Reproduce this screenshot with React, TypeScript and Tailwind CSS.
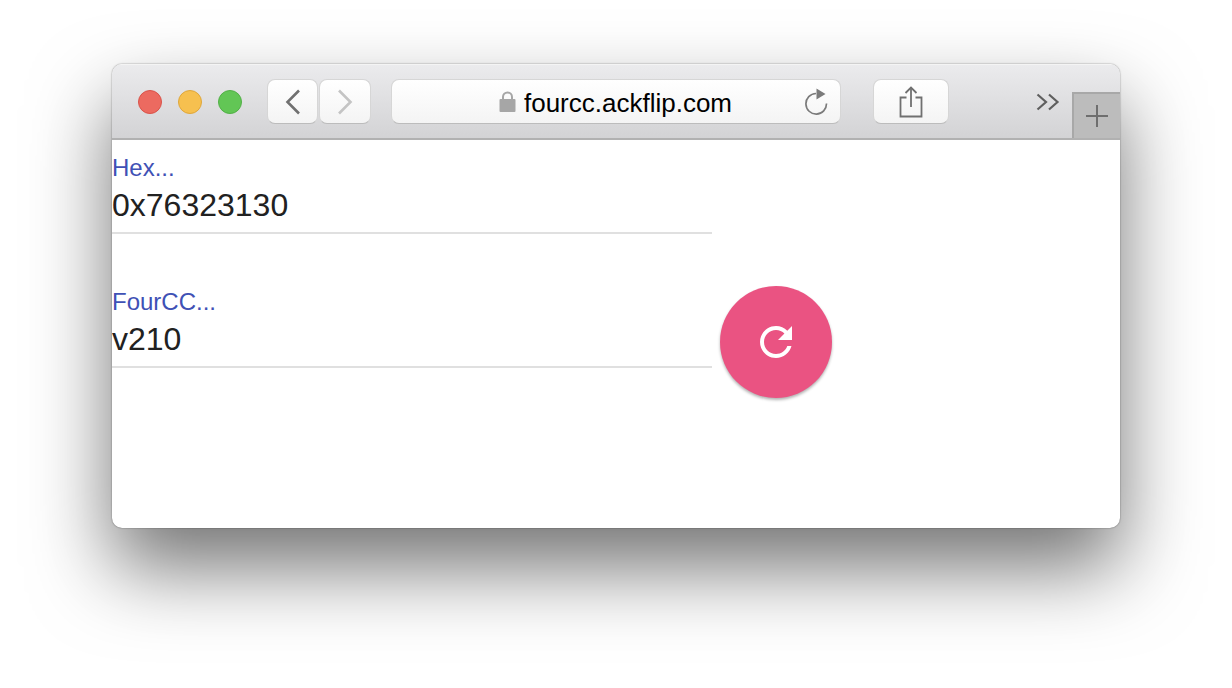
import React from 'react';

function ToolbarButton({ className, children }: { className: string; children?: React.ReactNode }) {
  return (
    <div
      className={`flex shrink-0 items-center justify-center h-[45px] rounded-[8px] bg-gradient-to-b from-[#ffffff] to-[#f4f4f4] border border-[#d6d6d6] border-b-[#bcbcbc] ${className}`}
    >
      {children}
    </div>
  );
}

function Light({ className }: { className: string }) {
  return <div className={`w-6 h-6 shrink-0 rounded-full border ${className}`} />;
}

function Field({ label, value }: { label: string; value: string }) {
  return (
    <div className="w-[600px] flex flex-col">
      <div className="text-[24px] leading-[28px] text-[#3f51b5]">{label}</div>
      <div className="text-[32px] leading-[38px] text-[#212121] mt-[4px] h-[40px]">{value}</div>
      <div className="h-[2px] bg-[#e0e0e0] mt-[6px]" />
    </div>
  );
}

export default function App() {
  return (
    <div className="w-[1232px] h-[688px] overflow-hidden bg-white pt-[64px] pl-[112px] font-['Liberation_Sans',Arial,sans-serif]">
      <div className="w-[1008px] h-[464px] rounded-[10px] bg-white overflow-hidden shadow-[0_40px_80px_rgba(0,0,0,0.55),0_0_1.5px_rgba(0,0,0,0.6)]">
        {/* Toolbar */}
        <div className="relative h-[76px] flex items-center pl-[26px] bg-gradient-to-b from-[#ebebed] to-[#d3d3d5] border-t border-t-[#f4f4f4] border-b-2 border-b-[#b1b1b1]">
          <div className="flex gap-[16px]">
            <Light className="bg-[#ec6a60] border-[#d9534a]" />
            <Light className="bg-[#f6c04f] border-[#dfa73b]" />
            <Light className="bg-[#62c655] border-[#52b047]" />
          </div>

          <div className="flex gap-[1px] ml-[25px]">
            <ToolbarButton className="w-[51px]">
              <svg width="16" height="26" viewBox="0 0 16 26" fill="none" stroke="#707070" strokeWidth="2.6">
                <path d="M14 1.5 L2.5 13 L14 24.5" />
              </svg>
            </ToolbarButton>
            <ToolbarButton className="w-[52px]">
              <svg width="16" height="26" viewBox="0 0 16 26" fill="none" stroke="#c4c4c4" strokeWidth="2.6">
                <path d="M2 1.5 L13.5 13 L2 24.5" />
              </svg>
            </ToolbarButton>
          </div>

          {/* Address bar */}
          <ToolbarButton className="relative w-[450px] ml-[20px]">
            <div className="flex items-center gap-[9px] -ml-[1px]">
              <svg width="17" height="21" viewBox="0 0 17 21">
                <path d="M4 9 V6 a4.5 4.5 0 0 1 9 0 V9" fill="none" stroke="#a6a6a6" strokeWidth="2" />
                <rect x="0.5" y="8" width="16" height="13" rx="1" fill="#a6a6a6" />
              </svg>
              <span className="text-[26px] leading-[30px] text-black mt-[2px] -ml-px">fourcc.ackflip.com</span>
            </div>
            <svg className="absolute right-[11px] top-[8px]" width="25" height="27" viewBox="0 0 25 27" fill="none">
              <path d="M12 5.5 A10.3 10.3 0 1 0 22.5 15.5" stroke="#7b7b7b" strokeWidth="1.7" />
              <path d="M12.5 0.5 L21.5 6 L12.5 11.5 Z" fill="#7b7b7b" />
            </svg>
          </ToolbarButton>

          <ToolbarButton className="w-[76px] ml-[32px]">
            <svg width="24" height="32" viewBox="0 0 24 32" fill="none" stroke="#707070" strokeWidth="1.8">
              <path d="M7.5 11.5 H1.5 V30.5 H22.5 V11.5 H16.5" />
              <path d="M12 21 V1.5" />
              <path d="M6.5 7 L12 1.5 L17.5 7" />
            </svg>
          </ToolbarButton>

          <svg className="shrink-0 ml-[87px] mt-[1px]" width="24" height="18" viewBox="0 0 24 18" fill="none" stroke="#5f5f5f" strokeWidth="2.2">
            <path d="M1.5 1.5 L10 9 L1.5 16.5" />
            <path d="M13 1.5 L21.5 9 L13 16.5" />
          </svg>

          {/* New tab */}
          <div className="absolute right-0 bottom-0 w-[48px] h-[46px] flex items-center justify-center bg-[#bcbcbc] border-l-2 border-t-2 border-[#a8a8a8]">
            <svg width="24" height="24" viewBox="0 0 24 24" stroke="#6e6e6e" strokeWidth="2">
              <path d="M12 1 V23 M1 12 H23" />
            </svg>
          </div>
        </div>

        {/* Content */}
        <div className="flex items-start">
          <div className="flex flex-col gap-[54px] pt-[14px]">
            <Field label="Hex..." value="0x76323130" />
            <Field label="FourCC..." value="v210" />
          </div>
          <button className="w-[112px] h-[112px] mt-[146px] ml-[8px] rounded-full bg-[#ea5382] flex items-center justify-center shadow-[0_2px_3px_rgba(0,0,0,0.3)]">
            <svg width="48" height="48" viewBox="0 0 24 24" fill="#ffffff">
              <path d="M17.65 6.35C16.2 4.9 14.21 4 12 4c-4.42 0-7.99 3.58-7.99 8s3.57 8 7.99 8c3.73 0 6.84-2.55 7.73-6h-2.08c-.82 2.33-3.04 4-5.65 4-3.31 0-6-2.69-6-6s2.69-6 6-6c1.66 0 3.14.69 4.22 1.78L13 11h7V4l-2.35 2.35z" />
            </svg>
          </button>
        </div>
      </div>
    </div>
  );
}
